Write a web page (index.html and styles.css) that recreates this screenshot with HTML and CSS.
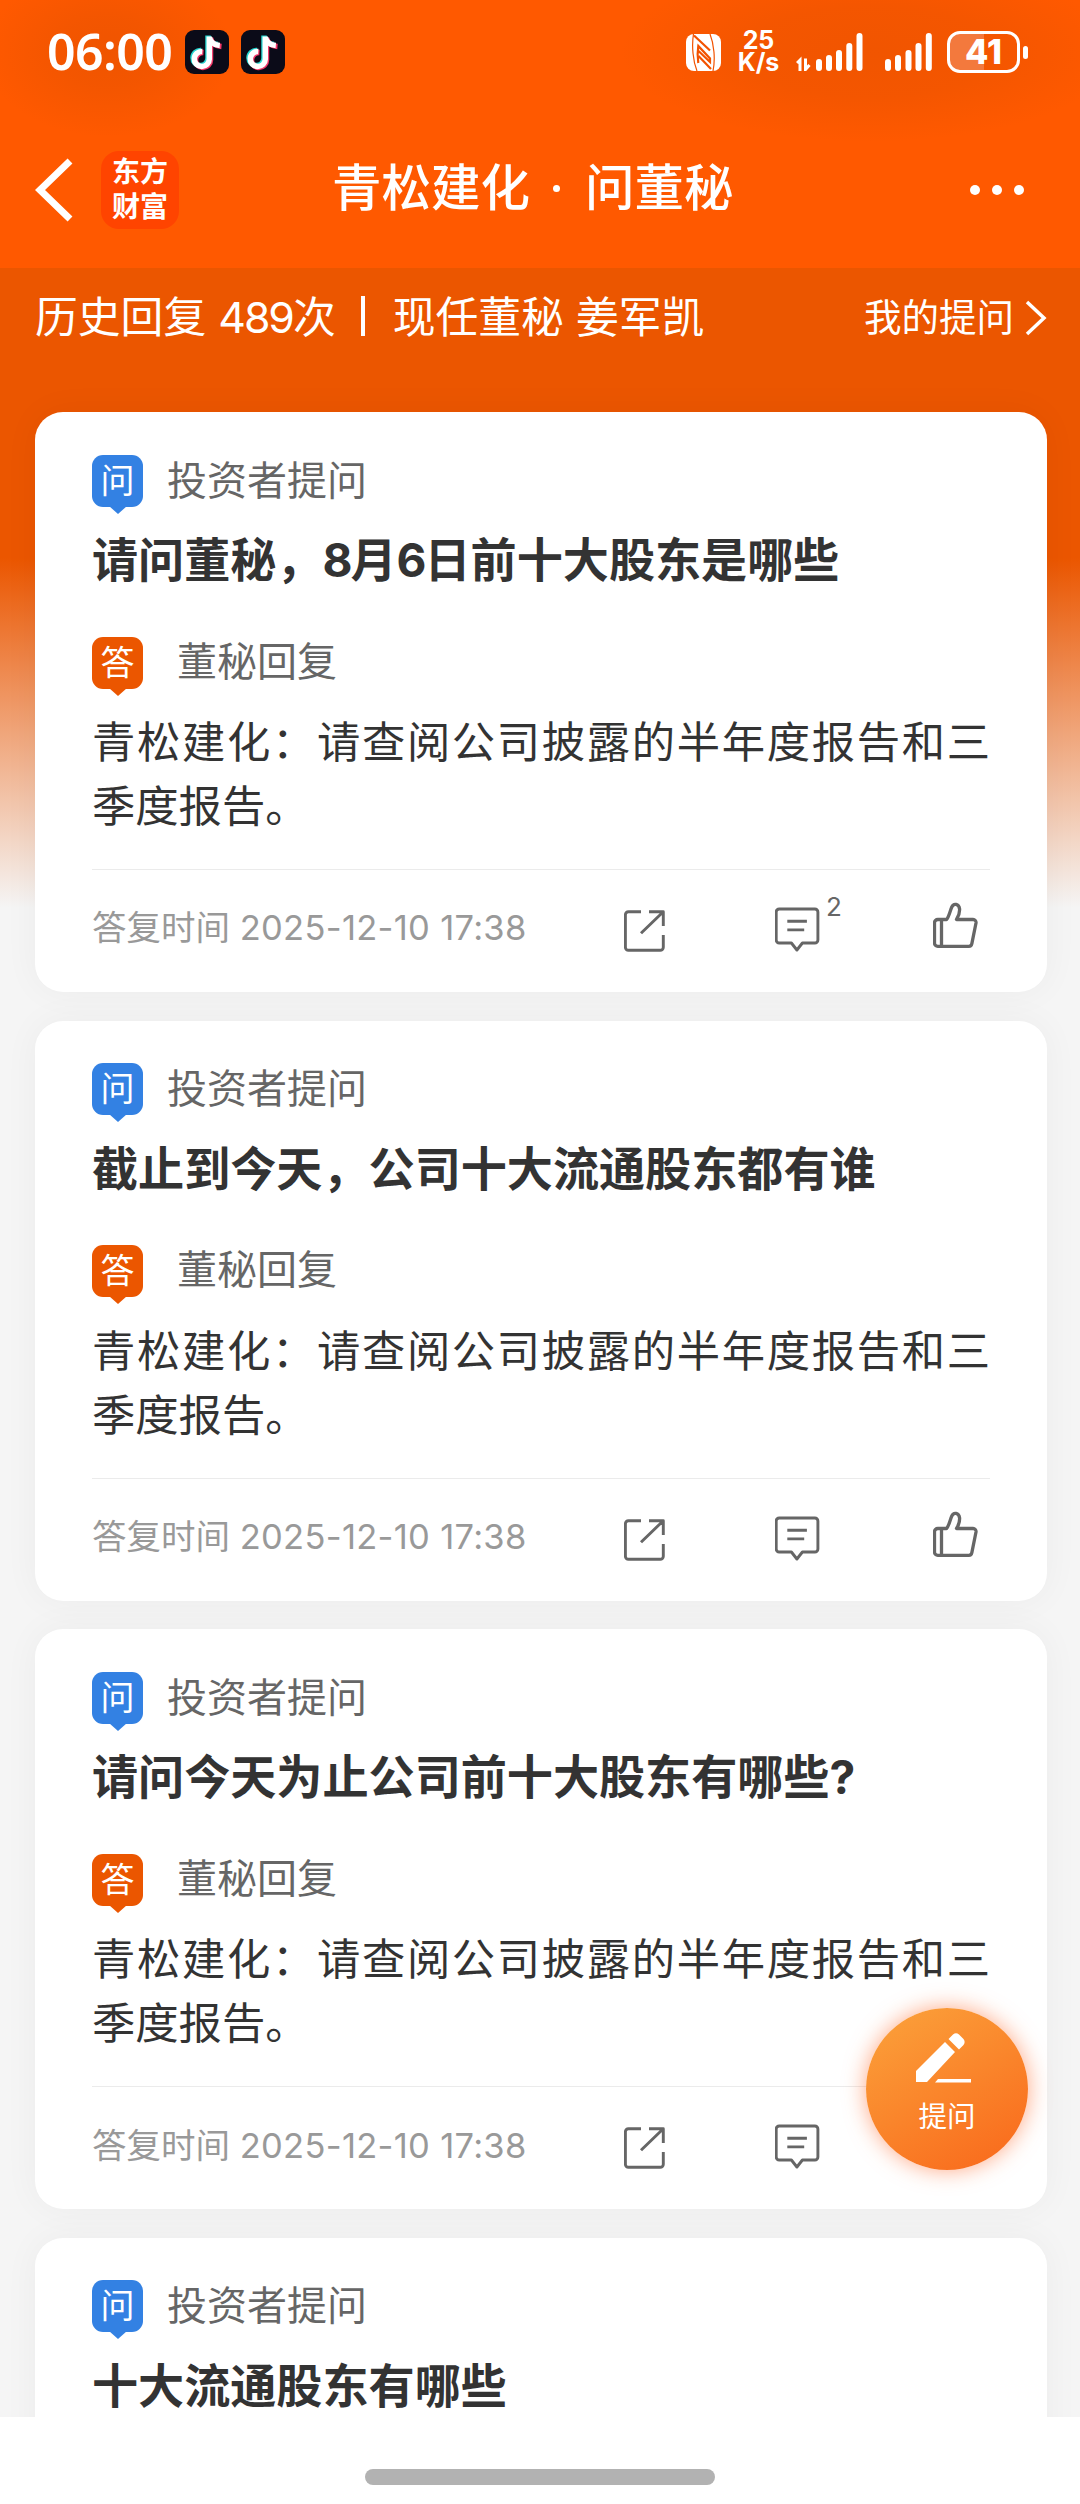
FILE: index.html
```html
<!DOCTYPE html>
<html lang="zh-CN">
<head>
  <meta charset="UTF-8" />
  <meta name="viewport" content="width=device-width, initial-scale=1.0"/>
  <title>青松建化 · 问董秘</title>
  <link rel="stylesheet" href="styles.css">
</head>
<body>
  <svg class="defs" width="0" height="0">
    <symbol id="icon-share" viewBox="0 0 48 52">
      <path d="M17 9.7H4.4a3 3 0 0 0-3 3V45.3a3 3 0 0 0 3 3H36.3a3 3 0 0 0 3-3V33M25 9.7H39.3V24M39.3 9.7L17 31.3"/>
    </symbol>
    <symbol id="icon-comment" viewBox="0 0 48 52">
      <path d="M4.2 7H39.9a3 3 0 0 1 3 3V38a3 3 0 0 1-3 3H27.4L21.9 48L16.4 41H4.2a3 3 0 0 1-3-3V10a3 3 0 0 1 3-3zM12.3 19.2H31.9M12.3 27.9H29.2"/>
    </symbol>
    <symbol id="icon-like" viewBox="0 0 48 52">
      <path d="M13.5 17.5C16 15 17 9 18.8 5C20.5 1 26 1.500 26.600 7C26.800 11 25.500 14.500 23.500 17.500H40a3 3 0 0 1 3 3.500L38.800 41.800a3 3 0 0 1-3 2.500H4.800a3.300 3.300 0 0 1-3.300-3.300V20.800a3.300 3.300 0 0 1 3.300-3.300zM8.500 17.500V44"/>
    </symbol>
    <symbol id="icon-note" viewBox="0 0 44 44">
      <rect width="44" height="44" rx="9" fill="#0b0b18"/>
      <g fill="none" stroke-width="5.500">
        <path stroke="#25d5d0" d="M23 5.500V28a7.500 7.500 0 1 1-7-7.500M23 6c1 5 4.500 8 10 8.500"/>
        <path stroke="#f4386a" d="M25.500 7.500V30a7.500 7.500 0 1 1-7-7.500M25.500 8c1 5 4.500 8 11 8.500"/>
        <path stroke="#fff" d="M24.300 6.500V29a7.500 7.500 0 1 1-7-7.500M24.300 7c1 5 4.500 8 10.500 8.500"/>
      </g>
    </symbol>
  </svg>

  <div class="header">
    <div class="status-bar">
      <span class="time">06:00</span>
      <svg class="note"><use href="#icon-note"/></svg>
      <svg class="note"><use href="#icon-note"/></svg>
      <svg class="nfc" viewBox="0 0 35 37">
        <rect width="35" height="37" rx="8" fill="#fff"/>
        <path fill="none" stroke="#f25200" stroke-width="1.200" d="M7.500 0C5.500 12 7 27 11 37M24 0C28 10 29.500 25 27 37"/>
        <path fill="none" stroke="#f25200" stroke-width="2.200" d="M8 1.500L24 16.500M12.300 29C11.500 24 11.500 17 12.300 12L24 24.500V28L12.500 17M12.500 22L25 35"/>
      </svg>
      <span class="speed"><span>25</span><span>K/s</span></span>
      <svg class="signal signal-data" viewBox="0 0 68 38">
        <path fill="none" stroke="#fff" stroke-width="3" d="M1 30L4 27V38M9.500 25.500V36.500L13.500 32"/>
        <path fill="none" stroke="#fff" stroke-width="6" stroke-linecap="round" d="M23 29V35M33 25V35M43 20V35M53.300 13V35M63.500 3V35"/>
      </svg>
      <svg class="signal" viewBox="0 0 48 38">
        <path fill="none" stroke="#fff" stroke-width="6" stroke-linecap="round" d="M3 29V35M13 25V35M23.500 20V35M33.500 13V35M43.800 3V35"/>
      </svg>
      <span class="battery">41</span>
    </div>

    <div class="nav">
      <svg class="back" viewBox="0 0 40 64"><path d="M35 3L5 32L35 61"/></svg>
      <div class="logo"><span>东方</span><span>财富</span></div>
      <h1 class="title">青松建化<i></i>问董秘</h1>
      <div class="more"><i></i><i></i><i></i></div>
    </div>
  </div>

  <div class="content">
    <div class="summary">
      <span>历史回复 <span class="num">489</span>次</span>
      <i class="bar"></i>
      <span>现任董秘 姜军凯</span>
      <a class="mine">我的提问<svg viewBox="0 0 22 36"><path d="M2 2L19 18L2 34"/></svg></a>
    </div>

    <div class="card">
      <div class="role"><span class="badge ask">问</span>投资者提问</div>
      <h2 class="question">请问董秘，<span class="num">8</span>月<span class="num">6</span>日前十大股东是哪些</h2>
      <div class="role reply"><span class="badge answer">答</span>董秘回复</div>
      <p class="answer-text">青松建化：请查阅公司披露的半年度报告和三季度报告。</p>
      <div class="card-footer">
        <span class="date">答复时间 <span class="num">2025-12-10 17:38</span></span>
        <svg class="icon"><use href="#icon-share"/></svg>
        <span class="comments"><svg class="icon"><use href="#icon-comment"/></svg><sup>2</sup></span>
        <svg class="icon like"><use href="#icon-like"/></svg>
      </div>
    </div>

    <div class="card">
      <div class="role"><span class="badge ask">问</span>投资者提问</div>
      <h2 class="question">截止到今天，公司十大流通股东都有谁</h2>
      <div class="role reply"><span class="badge answer">答</span>董秘回复</div>
      <p class="answer-text">青松建化：请查阅公司披露的半年度报告和三季度报告。</p>
      <div class="card-footer">
        <span class="date">答复时间 <span class="num">2025-12-10 17:38</span></span>
        <svg class="icon"><use href="#icon-share"/></svg>
        <span class="comments"><svg class="icon"><use href="#icon-comment"/></svg></span>
        <svg class="icon like"><use href="#icon-like"/></svg>
      </div>
    </div>

    <div class="card">
      <div class="role"><span class="badge ask">问</span>投资者提问</div>
      <h2 class="question">请问今天为止公司前十大股东有哪些<span class="mark">?</span></h2>
      <div class="role reply"><span class="badge answer">答</span>董秘回复</div>
      <p class="answer-text">青松建化：请查阅公司披露的半年度报告和三季度报告。</p>
      <div class="card-footer">
        <span class="date">答复时间 <span class="num">2025-12-10 17:38</span></span>
        <svg class="icon"><use href="#icon-share"/></svg>
        <span class="comments"><svg class="icon"><use href="#icon-comment"/></svg></span>
        <svg class="icon like"><use href="#icon-like"/></svg>
      </div>
    </div>

    <div class="card">
      <div class="role"><span class="badge ask">问</span>投资者提问</div>
      <h2 class="question">十大流通股东有哪些</h2>
    </div>
  </div>

  <div class="home-area"><div class="home-bar"></div></div>

  <div class="fab">
    <svg viewBox="0 0 56 52">
      <path fill="#fff" d="M0 50V39L29 10L39 20L11 50zM32.500 7L37 2.500a5 5 0 0 1 6 0L47.500 7a5 5 0 0 1 0 6L43 17.500z"/>
      <path fill="#fff" d="M22 47H55V50.500H19z"/>
    </svg>
    <span>提问</span>
  </div>
</body>
</html>
```
FILE: styles.css
```css
* {
  box-sizing: border-box;
}

body {
  margin: 0;
  width: 1080px;
  height: 2504px;
  display: flex;
  flex-direction: column;
  position: relative;
  overflow: hidden;
  font-family: Inter, "Noto Sans CJK SC", sans-serif;
  line-height: 1.2;
  color: #333;
  background: #fff;
}

h1, h2, p {
  margin: 0;
}

svg {
  display: block;
  flex: none;
}

.defs {
  position: absolute;
}

/* header */
.header {
  height: 268px;
  flex: none;
  color: #fff;
  background:
    radial-gradient(ellipse 125px 85px at 108px 52px, rgba(190, 70, 0, 0.24), rgba(190, 70, 0, 0.18) 40%, transparent),
    radial-gradient(ellipse 250px 90px at 870px 52px, rgba(190, 70, 0, 0.22), rgba(190, 70, 0, 0.17) 50%, transparent),
    #ff5900;
}

.status-bar {
  height: 104px;
  padding-left: 47px;
  display: flex;
  align-items: center;
}

.time {
  width: 138px;
  margin-top: -3px;
  font-family: "Noto Sans", sans-serif;
  font-size: 50px;
  font-weight: 600;
  letter-spacing: -0.6px;
  white-space: nowrap;
}

.note {
  width: 44px;
  height: 44px;
  margin-right: 12px;
}

.nfc {
  width: 35px;
  height: 37px;
  margin-left: 389px;
}

.speed {
  width: 75px;
  display: flex;
  flex-direction: column;
  align-items: center;
  margin-top: -2px;
  font-size: 25px;
  font-weight: 700;
  line-height: 22px;
}

.signal {
  width: 48px;
  height: 38px;
  margin-right: 14px;
}

.signal-data {
  width: 68px;
  margin-right: 21px;
}

.battery {
  width: 73px;
  height: 42px;
  position: relative;
  border: 3px solid #fff;
  border-radius: 13px;
  background: linear-gradient(90deg, #f3793d 34px, transparent 34px);
  text-align: center;
  font-size: 34px;
  font-weight: 800;
  line-height: 36px;
}

.battery::after {
  content: "";
  position: absolute;
  right: -11px;
  top: 12px;
  width: 5px;
  height: 13px;
  border-radius: 3px;
  background: #fff;
}

.nav {
  height: 172px;
  padding: 0 56px 0 35px;
  display: flex;
  align-items: center;
}

.back {
  width: 40px;
  height: 64px;
}

.back path {
  fill: none;
  stroke: #fff;
  stroke-width: 7;
}

.logo {
  width: 78px;
  height: 78px;
  margin-left: 26px;
  padding-top: 4px;
  border-radius: 18px;
  background: #ff4400;
  display: flex;
  flex-direction: column;
  align-items: center;
  font-size: 28px;
  font-weight: 700;
  line-height: 35px;
}

.title {
  margin-left: 153px;
  margin-top: -3px;
  display: flex;
  align-items: center;
  font-size: 49.5px;
  font-weight: 500;
}

.title i {
  width: 7px;
  height: 7px;
  margin: 0 25px 0 23px;
  border-radius: 50%;
  background: #fff;
}

.more {
  margin-left: auto;
  display: flex;
  gap: 12px;
}

.more i {
  width: 10px;
  height: 10px;
  border-radius: 50%;
  background: #fff;
}

/* list */
.content {
  height: 2149px;
  flex: none;
  padding: 0 33px 0 35px;
  overflow: hidden;
  background: linear-gradient(#eb5600 290px, #f5f5f5 640px);
}

.summary {
  height: 144px;
  padding-bottom: 45px;
  display: flex;
  align-items: center;
  color: #fff;
  font-size: 42.8px;
  white-space: nowrap;
}

.summary .num {
  letter-spacing: -2px;
}

.bar {
  width: 4px;
  height: 40px;
  margin: -4px 28px 0 25px;
  background: #fff;
}

.mine {
  margin-left: auto;
  display: flex;
  align-items: center;
  gap: 11px;
  font-size: 37.5px;
}

.mine svg {
  width: 22px;
  height: 36px;
}

.mine path {
  fill: none;
  stroke: #fff;
  stroke-width: 3.5;
}

.card {
  height: 580px;
  margin-bottom: 28.67px;
  padding: 43px 57px 0;
  border-radius: 28px;
  background: #fff;
  box-shadow: 0 0 36px rgba(0, 0, 0, 0.045);
}

.role {
  height: 51px;
  display: flex;
  align-items: center;
  gap: 24px;
  color: #666;
  font-size: 40px;
}

.reply {
  margin-top: 47px;
  padding-bottom: 2px;
  gap: 34px;
}

.badge {
  width: 51px;
  height: 52px;
  position: relative;
  border-radius: 11px;
  color: #fff;
  font-size: 34px;
  line-height: 51px;
  text-align: center;
}

.reply .badge {
  top: 1px;
}

.badge::after {
  content: "";
  position: absolute;
  left: 17px;
  top: 51px;
  border: 9px solid transparent;
  border-top: 8px solid;
  border-bottom: 0;
}

.ask {
  background: #3381e3;
}

.ask::after {
  border-top-color: #3381e3;
}

.answer {
  background: #eb5600;
}

.answer::after {
  border-top-color: #eb5600;
}

.question {
  margin-top: 24px;
  font-size: 46.1px;
  font-weight: 700;
  line-height: 60px;
  white-space: nowrap;
}

.question .num {
  letter-spacing: -2px;
}

.answer-text {
  margin-top: 22px;
  font-size: 43.3px;
  line-height: 64px;
  text-align: justify;
}

.card-footer {
  height: 117px;
  margin-top: 31px;
  border-top: 1px solid #ebebeb;
  display: grid;
  grid-template-columns: 532px 151px 158px auto;
  align-items: center;
}

.date {
  color: #999;
  font-size: 34.5px;
  white-space: nowrap;
}

.date .num {
  letter-spacing: 0.3px;
}

.icon {
  width: 48px;
  height: 52px;
  fill: none;
  stroke: #666;
  stroke-width: 2.9;
  stroke-linejoin: round;
}

.like {
  stroke-width: 3.3;
}

.comments {
  position: relative;
}

.comments sup {
  position: absolute;
  left: 51px;
  top: -11px;
  color: #666;
  font-size: 26px;
  line-height: 32px;
}

/* floating button */
.fab {
  position: absolute;
  left: 866px;
  top: 2008px;
  width: 162px;
  height: 162px;
  padding-top: 24px;
  display: flex;
  flex-direction: column;
  align-items: center;
  border-radius: 50%;
  color: #fff;
  font-size: 28.5px;
  line-height: 34px;
  background: linear-gradient(150deg, #fba03a 5%, #f96a1c 95%);
  box-shadow: 0 0 22px rgba(255, 95, 30, 0.55);
}

.fab svg {
  width: 56px;
  height: 52px;
  margin: 0 6px 16px 0;
}

.home-area {
  flex: 1;
  display: flex;
  justify-content: center;
  align-items: flex-start;
  padding-top: 52px;
  background: #fff;
}

.home-bar {
  width: 350px;
  height: 16px;
  border-radius: 8px;
  background: #b2b2b2;
}
```
